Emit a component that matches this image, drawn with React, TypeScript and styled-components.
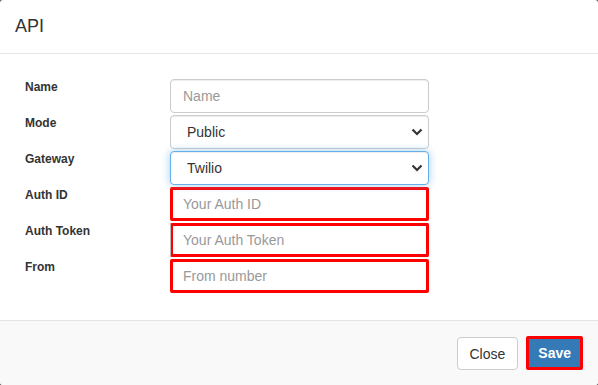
import React from 'react'
import styled, { createGlobalStyle, css } from 'styled-components'

const GlobalStyle = createGlobalStyle`
  html, body {
    margin: 0;
    padding: 0;
    background: #5a5a5a;
  }
  body {
    font-family: "Liberation Sans", Arial, sans-serif;
    font-size: 14px;
    color: #333;
  }
  * {
    box-sizing: border-box;
  }
`

const fields = [
  { label: 'Name', kind: 'input', placeholder: 'Name' },
  { label: 'Mode', kind: 'select', value: 'Public', options: [ 'Public', 'Private' ] },
  { label: 'Gateway', kind: 'select', value: 'Twilio', options: [ 'Twilio', 'Nexmo' ], focused: true },
  { label: 'Auth ID', kind: 'input', placeholder: 'Your Auth ID', flag: 'full' },
  { label: 'Auth Token', kind: 'input', placeholder: 'Your Auth Token', flag: 'shifted' },
  { label: 'From', kind: 'input', placeholder: 'From number', flag: 'full' },
] as const

type Field = (typeof fields)[number]

const Chevron: React.FC = () => (
  <ArrowIcon width="12" height="8" viewBox="0 0 12 8">
    <path d="M1.5 1.5 L6 6 L10.5 1.5" fill="none" stroke="#333" strokeWidth="2.2" />
  </ArrowIcon>
)

const FieldControl: React.FC<{ field: Field }> = ({ field }) => {
  if (field.kind === 'select') {
    return (
      <SelectWrap>
        <Select
          defaultValue={ field.value }
          $focused={ 'focused' in field && field.focused }
        >
          { field.options.map(o => <option key={ o }>{ o }</option>) }
        </Select>
        <Chevron />
      </SelectWrap>
    )
  }
  return (
    <Input
      type="text"
      placeholder={ field.placeholder }
      $flag={ 'flag' in field ? field.flag : undefined }
    />
  )
}

const App: React.FC = () => {
  return (
    <>
      <GlobalStyle />
      <Modal>
        <Header>
          <Title>API</Title>
        </Header>
        <Body>
          <Form>
            { fields.map(f => (
              <React.Fragment key={ f.label }>
                <Label>{ f.label }</Label>
                <FieldControl field={ f } />
              </React.Fragment>
            )) }
          </Form>
        </Body>
        <Footer>
          <CloseButton>Close</CloseButton>
          <SaveButton>Save</SaveButton>
        </Footer>
      </Modal>
    </>
  )
}

const Modal = styled.div`
  width: 598px;
  height: 385px;
  background: #fff;
  border-radius: 3px;
  overflow: hidden;
  display: flex;
  flex-direction: column;
`

const Header = styled.div`
  height: 54px;
  padding: 14px 15px 0;
  border-bottom: 1px solid #e5e5e5;
`

const Title = styled.h4`
  margin: 0;
  font-size: 18px;
  font-weight: normal;
  line-height: 24px;
  color: #333;
`

const Body = styled.div`
  flex: 1;
  padding: 25px 0 0 25px;
`

const Form = styled.div`
  display: grid;
  grid-template-columns: 145px 259px;
  row-gap: 2px;
`

const Label = styled.label`
  font-size: 12px;
  font-weight: bold;
  line-height: 17px;
  color: #333;
  align-self: start;
`

const controlBase = css`
  width: 259px;
  height: 34px;
  margin: 0;
  padding: 6px 12px;
  font-family: "Liberation Sans", Arial, sans-serif;
  font-size: 14px;
  line-height: 20px;
  color: #555;
  background: #fff;
  border: 1px solid #ccc;
  border-radius: 4px;
  box-shadow: inset 0 1px 1px rgba(0, 0, 0, 0.075);
  outline: none;

  &::placeholder {
    color: #999;
  }
`

const Input = styled.input<{ $flag?: 'full' | 'shifted' }>`
  ${ controlBase }
  ${ p => p.$flag === 'full' && css`
    border: 3px solid #ff0000;
    border-radius: 2px;
    padding-left: 10px;
    box-shadow: none;
  ` }
  ${ p => p.$flag === 'shifted' && css`
    border: 3px solid #ff0000;
    border-left: 1px solid #bbb;
    border-radius: 2px;
    padding-left: 12px;
    box-shadow: inset 2px 0 0 #ff0000;
  ` }
`

const SelectWrap = styled.div`
  position: relative;
  width: 259px;
  height: 34px;
`

const Select = styled.select<{ $focused?: boolean }>`
  ${ controlBase }
  appearance: none;
  padding-left: 16px;
  color: #333;
  ${ p => p.$focused && css`
    border-color: #66afe9;
    box-shadow: inset 0 1px 1px rgba(0, 0, 0, 0.075), 0 0 8px rgba(102, 175, 233, 0.6);
  ` }
`

const ArrowIcon = styled.svg`
  position: absolute;
  right: 6px;
  top: 13px;
  pointer-events: none;
`

const Footer = styled.div`
  height: 65px;
  padding: 15px 15px 0;
  border-top: 1px solid #e5e5e5;
  background: #f9f9f9;
  display: flex;
  justify-content: flex-end;
  align-items: flex-start;
  gap: 8px;
`

const buttonBase = css`
  font-family: "Liberation Sans", Arial, sans-serif;
  font-size: 14px;
  line-height: 20px;
  cursor: pointer;
`

const CloseButton = styled.button`
  ${ buttonBase }
  height: 33px;
  margin-top: 1px;
  padding: 5px 12px;
  color: #333;
  background: #fff;
  border: 1px solid #ccc;
  border-radius: 4px;
`

const SaveButton = styled.button`
  ${ buttonBase }
  height: 34px;
  padding: 4px 9px;
  font-weight: bold;
  color: #fff;
  background: #337ab7;
  border: 3px solid #ff0000;
  border-radius: 2px;
`

export default App
